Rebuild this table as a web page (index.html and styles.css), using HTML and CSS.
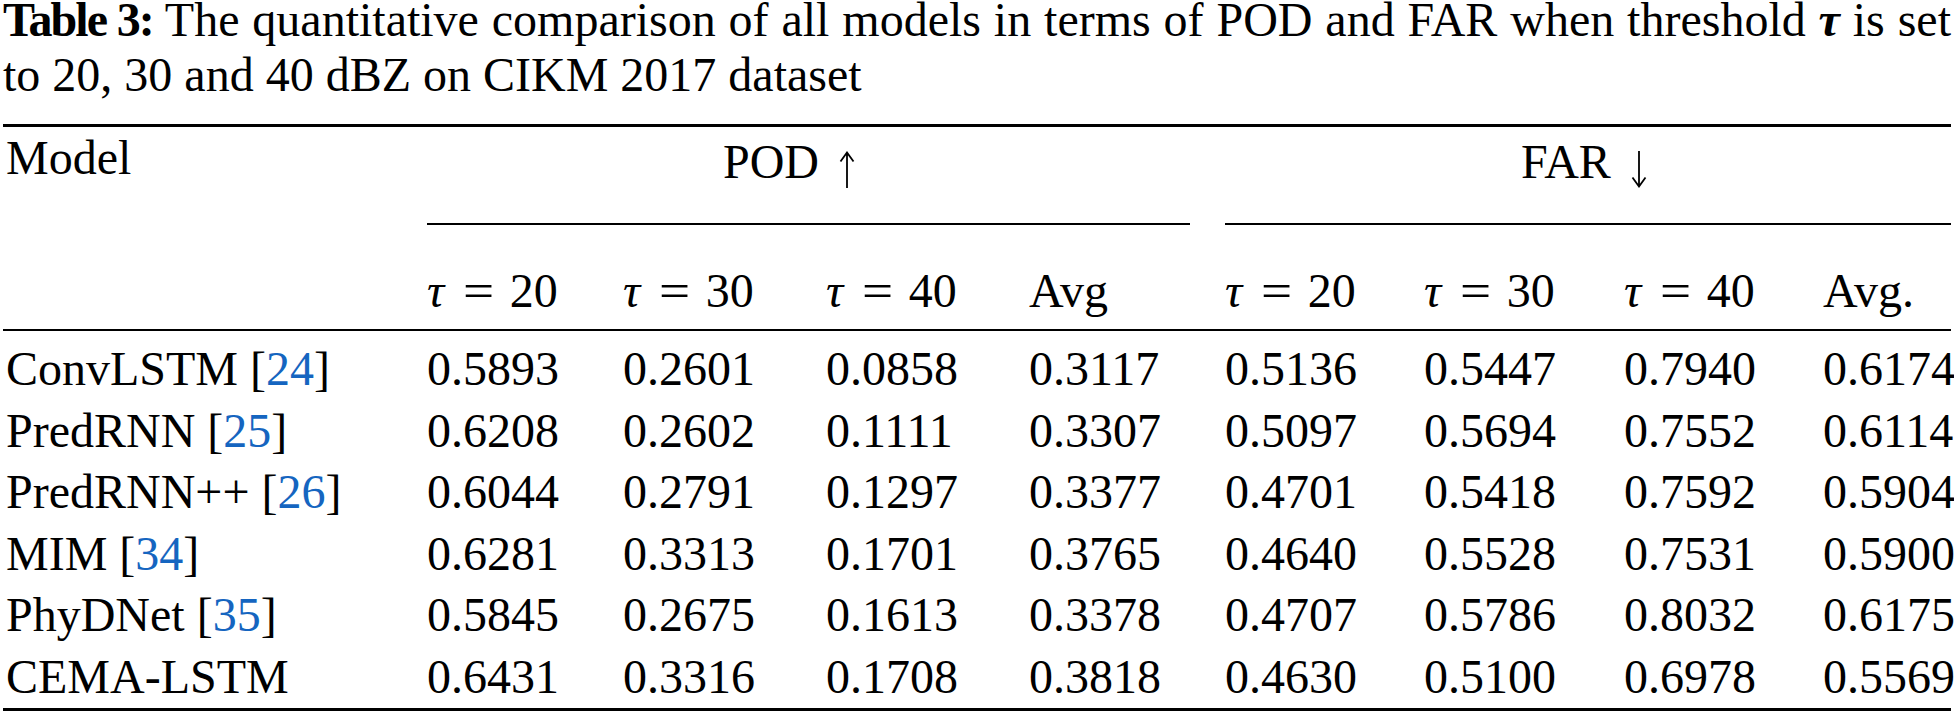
FILE: index.html
```html
<!DOCTYPE html>
<html lang="en">
<head>
<meta charset="utf-8">
<title>Table 3</title>
<link rel="stylesheet" href="styles.css">
</head>
<body>
<div class="page">
  <p class="caption"><span class="cap-line first-line"><b class="label">Table 3:</b> The quantitative comparison of all models in terms of POD and FAR when threshold <b><i>τ</i></b> is set</span><span class="cap-line second-line">to 20, 30 and 40 dBZ on CIKM 2017 dataset</span></p>
  <div class="table">
    <div class="model-head">Model</div>
    <div class="group pod">POD <svg class="arrow" width="20" height="37" viewBox="0 0 20 37" aria-hidden="true"><path d="M10 2 V37 M3.5 10.5 L10 1.5 L16.5 10.5" fill="none" stroke="#000" stroke-width="1.8"/></svg></div>
    <div class="group far">FAR <svg class="arrow" width="20" height="37" viewBox="0 0 20 37" aria-hidden="true"><path d="M10 0 V35 M3.5 26.5 L10 35.5 L16.5 26.5" fill="none" stroke="#000" stroke-width="1.8"/></svg></div>

    <div class="sub"><i>τ</i><span class="eq">=</span>20</div>
    <div class="sub"><i>τ</i><span class="eq">=</span>30</div>
    <div class="sub"><i>τ</i><span class="eq">=</span>40</div>
    <div class="sub">Avg</div>
    <div class="sub"><i>τ</i><span class="eq">=</span>20</div>
    <div class="sub"><i>τ</i><span class="eq">=</span>30</div>
    <div class="sub"><i>τ</i><span class="eq">=</span>40</div>
    <div class="sub">Avg.</div>

    <div class="cell name first">ConvLSTM [<span class="ref">24</span>]</div>
    <div class="cell first">0.5893</div><div class="cell first">0.2601</div><div class="cell first">0.0858</div><div class="cell first">0.3117</div>
    <div class="cell first">0.5136</div><div class="cell first">0.5447</div><div class="cell first">0.7940</div><div class="cell first">0.6174</div>

    <div class="cell name">PredRNN [<span class="ref">25</span>]</div>
    <div class="cell">0.6208</div><div class="cell">0.2602</div><div class="cell">0.1111</div><div class="cell">0.3307</div>
    <div class="cell">0.5097</div><div class="cell">0.5694</div><div class="cell">0.7552</div><div class="cell">0.6114</div>

    <div class="cell name">PredRNN++ [<span class="ref">26</span>]</div>
    <div class="cell">0.6044</div><div class="cell">0.2791</div><div class="cell">0.1297</div><div class="cell">0.3377</div>
    <div class="cell">0.4701</div><div class="cell">0.5418</div><div class="cell">0.7592</div><div class="cell">0.5904</div>

    <div class="cell name">MIM [<span class="ref">34</span>]</div>
    <div class="cell">0.6281</div><div class="cell">0.3313</div><div class="cell">0.1701</div><div class="cell">0.3765</div>
    <div class="cell">0.4640</div><div class="cell">0.5528</div><div class="cell">0.7531</div><div class="cell">0.5900</div>

    <div class="cell name">PhyDNet [<span class="ref">35</span>]</div>
    <div class="cell">0.5845</div><div class="cell">0.2675</div><div class="cell">0.1613</div><div class="cell">0.3378</div>
    <div class="cell">0.4707</div><div class="cell">0.5786</div><div class="cell">0.8032</div><div class="cell">0.6175</div>

    <div class="cell name">CEMA-LSTM</div>
    <div class="cell">0.6431</div><div class="cell">0.3316</div><div class="cell">0.1708</div><div class="cell">0.3818</div>
    <div class="cell">0.4630</div><div class="cell">0.5100</div><div class="cell">0.6978</div><div class="cell">0.5569</div>
  </div>
</div>
</body>
</html>
```

FILE: styles.css
```css
html, body {
  margin: 0;
  padding: 0;
  background: #ffffff;
}
body {
  font-family: "Liberation Serif", "Times New Roman", serif;
  color: #000000;
  width: 1954px;
  height: 717px;
  overflow: hidden;
}
.page {
  padding-left: 3px;
  width: 1948px;
}
.caption {
  margin: 0;
  font-size: 48px;
}
.cap-line {
  display: block;
  line-height: 40px;
  white-space: nowrap;
}
.first-line {
  text-align: justify;
  text-align-last: justify;
  word-spacing: -1px;
}
.second-line {
  margin-top: 15px;
}
.caption b {
  font-weight: bold;
}
.caption .label {
  letter-spacing: -2px;
}
.table {
  margin-top: 29px;
  width: 1948px;
  display: grid;
  grid-template-columns: 424px 196px 203px 203px 196px 199px 200px 199px 128px;
  border-top: 3px solid #000;
  border-bottom: 3px solid #000;
  font-size: 48px;
  line-height: 61.6px;
  white-space: nowrap;
}
.model-head {
  grid-column: 1;
  grid-row: 1 / 3;
  padding-left: 3px;
  border-bottom: 2px solid #000;
}
.group {
  grid-row: 1;
  box-sizing: border-box;
  height: 98px;
  padding-top: 4px;
  padding-left: 296px;
  border-bottom: 2px solid #000;
}
.pod {
  grid-column: 2 / 6;
  margin-right: 35px;
}
.far {
  grid-column: 6 / 10;
}
.arrow {
  vertical-align: -10px;
  margin-left: 6px;
}
.sub {
  grid-row: 2;
  box-sizing: border-box;
  height: 106px;
  padding-top: 35px;
  border-bottom: 2px solid #000;
}
.eq {
  display: inline-block;
  margin: 0 0.36em 0 0.44em;
  transform: scaleX(1.15);
}
.cell.name {
  padding-left: 3px;
}
.cell.first {
  padding-top: 7px;
}
.ref {
  color: #1565c0;
}
```
